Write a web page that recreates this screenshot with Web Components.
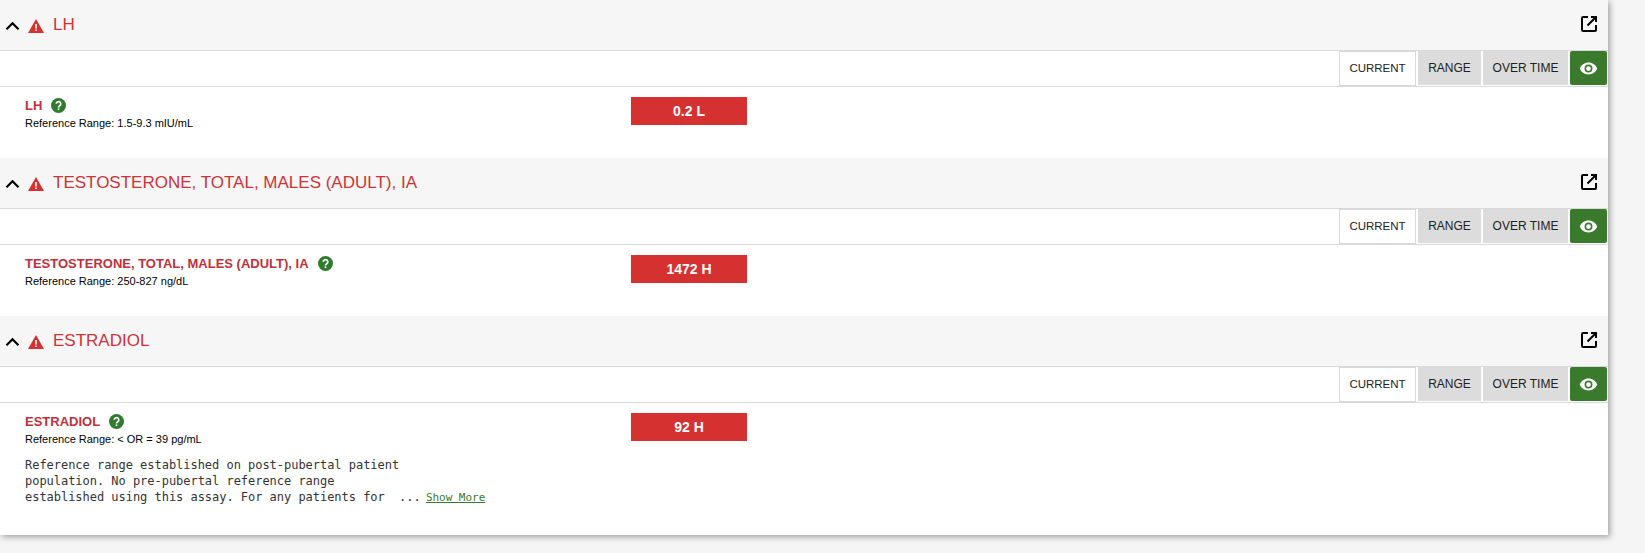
<!DOCTYPE html>
<html><head><meta charset="utf-8">
<style>
html,body{margin:0;padding:0;background:#f5f5f5;height:553px;overflow:hidden;font-family:"Liberation Sans",Arial,sans-serif}
</style></head><body>
<lab-card>
<lab-section title="LH" value="0.2 L" range="1.5-9.3 mIU/mL"></lab-section>
<lab-section title="TESTOSTERONE, TOTAL, MALES (ADULT), IA" value="1472 H" range="250-827 ng/dL"></lab-section>
<lab-section title="ESTRADIOL" value="92 H" range="&lt; OR = 39 pg/mL" last>Reference range established on post-pubertal patient
population. No pre-pubertal reference range
established using this assay. For any patients for  ... <a>Show More</a></lab-section>
</lab-card>
<template id="sec">
<style>
:host{display:block;background:#fff;color:#000}
.head{display:flex;align-items:center;height:50px;background:#f6f6f6;border-bottom:1px solid #d9d9d9;box-sizing:content-box}
.chev{width:15px;height:10px;margin:1px 0 0 5px;display:block}
.warn{width:16px;height:14px;margin:1px 0 0 8px;display:block}
h2{margin:-1px 0 0 9px;font:400 17px/20px "Liberation Sans",Arial,sans-serif;color:#cb3437;flex:1}
.ext{width:17px;height:17px;margin:-3px 10px 0 0;display:block}
.bar{display:flex;justify-content:flex-end;height:35px;border-bottom:1px solid #d9d9d9;gap:2px;padding-right:1px}
.tab{box-sizing:border-box;height:34px;display:flex;align-items:center;justify-content:center;font-size:12px;color:#222;background:#dcdcdc}
.tab.on{background:#fff;border:1px solid #d9d9d9;height:35px;padding-bottom:1px;font-size:11.5px}
.c{width:77px}.r{width:63px}.o{width:85px}
.eye{width:37px;background:#3a7a2c;border-radius:2px}
.eye svg{width:19px;height:19px;margin-top:1px}
.row{display:grid;grid-template-columns:606px 116px;padding:10px 0 0 25px;height:61px}
:host([last]) .row{height:122px}
.name{display:flex;align-items:center;height:17px;font-size:13px;font-weight:700;color:#c0303a}
.q{width:15px;height:15px;margin-left:9px;display:block}
.ref{font-size:11px;line-height:14px;margin-top:2px;color:#000}
.val{height:28px;background:#d53131;color:#fff;font-size:14px;font-weight:700;display:flex;align-items:center;justify-content:center}
.note{font:12px/16px "DejaVu Sans Mono",monospace;letter-spacing:-.03px;white-space:pre-wrap;color:#333;margin-top:11px}
::slotted(a){font-size:11px;color:#3a7a2c;text-decoration:underline;margin-left:-2px}
</style>
<div class="head">
<svg class="chev" viewBox="0 0 15 10"><path d="M1.5 8.2 7.5 2.2l6 6" fill="none" stroke="#000" stroke-width="2.2"/></svg>
<svg class="warn" viewBox="0 0 16 14"><path d="M8 0 16 14H0Z" fill="#d53131"/><path d="M7.2 5h1.6v4.5H7.2zM7.2 10.4h1.6v1.6H7.2z" fill="#fff"/></svg>
<h2></h2>
<svg class="ext" viewBox="0 0 17 17"><path d="M7 2H2a1 1 0 0 0-1 1v12a1 1 0 0 0 1 1h12a1 1 0 0 0 1-1v-5" fill="none" stroke="#000" stroke-width="2"/><path d="M10 2h5v5M15 2 6.5 10.5" fill="none" stroke="#000" stroke-width="2"/></svg>
</div>
<div class="bar">
<div class="tab on c">CURRENT</div><div class="tab r">RANGE</div><div class="tab o">OVER TIME</div>
<div class="tab eye"><svg viewBox="0 0 24 24"><path fill="#fff" d="M12 4.5C7 4.5 2.7 7.6 1 12c1.7 4.4 6 7.5 11 7.5s9.3-3.1 11-7.5c-1.7-4.4-6-7.5-11-7.5zM12 17a5 5 0 1 1 0-10 5 5 0 0 1 0 10zm0-8a3 3 0 1 0 0 6 3 3 0 0 0 0-6z"/></svg></div>
</div>
<div class="row">
<div>
<div class="name"><span class="nm"></span><svg class="q" viewBox="0 0 16 16"><circle cx="8" cy="8" r="8" fill="#2f7a2c"/><path d="M5.6 6.2a2.4 2.4 0 1 1 3.8 2c-.8.6-1.4 1-1.4 2" fill="none" stroke="#fff" stroke-width="1.8"/><rect x="7.1" y="11.1" width="1.8" height="1.8" fill="#fff"/></svg></div>
<div class="ref"></div>
<div class="note"><slot></slot></div>
</div>
<div class="val"></div>
</div>
</template>
<script>
class LabCard extends HTMLElement{
  constructor(){super();this.attachShadow({mode:'open'}).innerHTML=`<style>:host{display:block;width:1608px;background:#fff;box-shadow:2px 2px 6px rgba(0,0,0,.35);}</style><slot></slot>`;}
}
class LabSection extends HTMLElement{
  constructor(){super();this.attachShadow({mode:'open'}).appendChild(document.getElementById('sec').content.cloneNode(true));}
  connectedCallback(){
    const s=this.shadowRoot;
    s.querySelector('h2').textContent=this.getAttribute('title');
    s.querySelector('.nm').textContent=this.getAttribute('title');
    s.querySelector('.ref').textContent='Reference Range: '+this.getAttribute('range');
    s.querySelector('.val').textContent=this.getAttribute('value');
  }
}
customElements.define('lab-card',LabCard);
customElements.define('lab-section',LabSection);
</script>
</body></html>
